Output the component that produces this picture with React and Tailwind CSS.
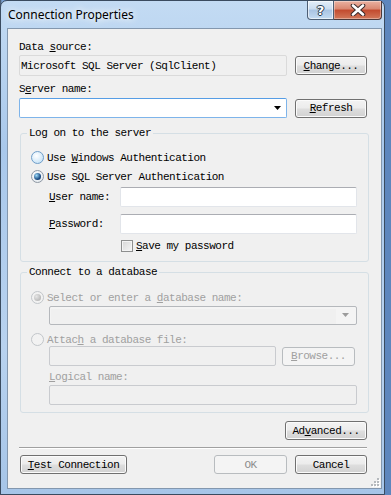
import React from "react";

const mono = "font-['Liberation_Mono',monospace] text-[11px] tracking-[-0.5px] leading-[12px]";

function Btn({ children, className = "", disabled }) {
  return (
    <div
      className={`flex items-center justify-center rounded-[3px] border ${
        disabled
          ? "border-[#b8bcbf] bg-[#f4f4f4] text-[#8c8c8c]"
          : "border-[#707070] bg-[linear-gradient(#f3f3f3_0%,#ececec_48%,#dedede_52%,#d2d2d2_100%)] text-black shadow-[inset_0_0_0_1px_#fbfbfb]"
      } ${className}`}
    >
      {children}
    </div>
  );
}

function Radio({ checked, disabled }) {
  return (
    <div
      className={`flex h-[13px] w-[13px] shrink-0 items-center justify-center rounded-full border ${
        disabled
          ? "border-[#c2c6ca] bg-[#f2f2f2]"
          : checked
          ? "border-[#8e98a3] bg-[radial-gradient(circle_at_40%_35%,#ffffff,#dde4ea)]"
          : "border-[#6f9ec9] bg-[radial-gradient(circle_at_40%_35%,#ffffff,#b9dcf5)]"
      }`}
    >
      {checked && (
        <div
          className={`h-[7px] w-[7px] rounded-full ${
            disabled
              ? "bg-[radial-gradient(circle_at_35%_35%,#e6e6e6,#a9a9a9)]"
              : "bg-[radial-gradient(circle_at_35%_35%,#9fdcfb,#1d4f86_60%,#0c2c55)]"
          }`}
        />
      )}
    </div>
  );
}

function Input({ className = "", disabled, children }) {
  return (
    <div
      className={`relative rounded-[2px] border ${
        disabled
          ? "border-[#c9cbcf] bg-[#f0f0f0]"
          : "border-[#e2e5ea] border-t-[#abadb3] bg-white"
      } ${className}`}
    >
      {children}
    </div>
  );
}

function Group({ label, className = "", children }) {
  return (
    <div className={`relative ml-[1px] w-[349px] rounded-[3px] border border-[#d5dfe5] ${className}`}>
      <span className="absolute left-[6px] top-[-7px] bg-[#f0f0f0] px-[2px] text-black">
        {label}
      </span>
      {children}
    </div>
  );
}

export default function App() {
  return (
    <div className="flex h-[495px] w-[391px] overflow-hidden bg-[linear-gradient(90deg,#3d4a5a_0px,#7fa6d6_2px,#5d86bd_6px)]">
      {/* Window */}
      <div className="flex h-[495px] w-[385px] shrink-0 flex-col rounded-t-[7px] border border-[#3a4b5f] bg-[linear-gradient(180deg,#c3dbf3,#a9c8eb_30%,#b8d2ef_70%,#a6c5e8)]">
        {/* Title bar */}
        <div className="flex h-[27px] items-start">
          <span className="ml-[7px] mt-[6px] font-['Noto_Sans',sans-serif] text-[12px] leading-[16px] text-black [text-shadow:0_0_6px_#ffffff,0_0_10px_#ffffff]">
            Connection Properties
          </span>
          <div className="ml-auto mr-[2px] flex">
            <div className="flex h-[19px] w-[27px] items-center justify-center rounded-bl-[4px] border border-t-0 border-[#4d5e74] bg-[linear-gradient(#e3eef9,#c9dcf0_45%,#a9c3e2_50%,#c4dbf2)] shadow-[inset_0_0_0_1px_rgba(255,255,255,0.6)]">
              <span className="font-['DejaVu_Sans',sans-serif] text-[13px] font-bold leading-[13px] text-white [text-shadow:0_0_1px_#2c3a4c,1px_0_0_#2c3a4c,-1px_0_0_#2c3a4c,0_1px_0_#2c3a4c,0_-1px_0_#2c3a4c]">
                ?
              </span>
            </div>
            <div className="flex h-[19px] w-[48px] items-center justify-center rounded-br-[4px] border border-l-0 border-t-0 border-[#4d3a3a] bg-[linear-gradient(#eab2a2,#d98670_45%,#c24a2e_50%,#d2785a)] shadow-[inset_0_0_0_1px_rgba(255,255,255,0.35)]">
              <svg width="16" height="12" viewBox="0 0 16 12">
                <path d="M3 1.5 L13 10.5 M13 1.5 L3 10.5" stroke="#3b2a2a" strokeWidth="4.6" strokeLinecap="round" />
                <path d="M3 1.5 L13 10.5 M13 1.5 L3 10.5" stroke="#ffffff" strokeWidth="2.6" strokeLinecap="round" />
              </svg>
            </div>
          </div>
        </div>

        {/* Client area */}
        <div className={`relative mb-[5px] ml-[6px] mr-[2px] flex-1 border border-[#8397ae] bg-[#f0f0f0] ${mono} text-black`}>
          <div className="flex w-[359px] flex-col pl-[11px]">
            <div className="mt-[12px] h-[12px]">
              Data <u>s</u>ource:
            </div>
            <div className="mt-[2px] flex h-[21px] items-center justify-between">
              <div className="flex h-[21px] w-[268px] items-center rounded-[2px] border border-[#dadada] bg-[#f0f0f0] pl-[1px]">
                Microsoft SQL Server (SqlClient)
              </div>
              <Btn className="h-[19px] w-[72px]">
                <span><u>C</u>hange...</span>
              </Btn>
            </div>
            <div className="mt-[7px] h-[12px]">
              S<u>e</u>rver name:
            </div>
            <div className="mt-[3px] flex h-[20px] items-center justify-between">
              <div className="flex h-[20px] w-[268px] items-center justify-end rounded-[2px] border border-[#7eb4ea] border-t-[#569de5] bg-white pr-[4px]">
                <svg width="8" height="5" viewBox="0 0 8 5">
                  <path d="M0 0 H7 L3.5 4 Z" fill="#000" />
                </svg>
              </div>
              <Btn className="h-[19px] w-[72px]">
                <span><u>R</u>efresh</span>
              </Btn>
            </div>

            {/* Log on group */}
            <Group label="Log on to the server" className="mt-[15px] pb-[9px] pt-[17px]">
              <div className="flex h-[13px] items-center gap-[3px] pl-[10px]">
                <Radio />
                <span>Use <u>W</u>indows Authentication</span>
              </div>
              <div className="mt-[6px] flex h-[13px] items-center gap-[3px] pl-[10px]">
                <Radio checked />
                <span>Use S<u>Q</u>L Server Authentication</span>
              </div>
              <div className="mt-[4px] flex h-[20px] items-center pl-[28px]">
                <span className="w-[71px]"><u>U</u>ser name:</span>
                <Input className="h-[20px] w-[237px]" />
              </div>
              <div className="mt-[7px] flex h-[20px] items-center pl-[28px]">
                <span className="w-[71px]"><u>P</u>assword:</span>
                <Input className="h-[20px] w-[237px]" />
              </div>
              <div className="mt-[6px] flex h-[12px] items-center gap-[3px] pl-[100px]">
                <div className="h-[12px] w-[12px] border border-[#8e8f8f] bg-[linear-gradient(135deg,#d6d6d6,#f6f6f6)] shadow-[inset_0_0_0_1px_#f4f4f4]" />
                <span><u>S</u>ave my password</span>
              </div>
            </Group>

            {/* Database group */}
            <Group label="Connect to a database" className="mt-[10px] pb-[7px] pt-[18px]">
              <div className="flex h-[13px] items-center gap-[3px] pl-[10px] text-[#a0a0a0]">
                <Radio checked disabled />
                <span>Select or enter a <u>d</u>atabase name:</span>
              </div>
              <div className="ml-[28px] mt-[2px] flex h-[19px] w-[308px] items-center rounded-[2px] border border-[#b5b8bc] bg-[#f4f4f4]">
                <div className="ml-[1px] mt-[1px] h-[15px] flex-1 bg-[#f0f0f0]" />
                <div className="flex w-[20px] items-center justify-center">
                  <svg width="8" height="5" viewBox="0 0 8 5">
                    <path d="M0 0 H7 L3.5 4 Z" fill="#9c9c9c" />
                  </svg>
                </div>
              </div>
              <div className="mt-[8px] flex h-[13px] items-center gap-[3px] pl-[10px] text-[#a0a0a0]">
                <Radio disabled />
                <span>Attac<u>h</u> a database file:</span>
              </div>
              <div className="ml-[28px] flex h-[20px] w-[308px] items-center gap-[6px]">
                <Input disabled className="h-[20px] w-[227px]" />
                <Btn disabled className="h-[19px] w-[73px]">
                  <span className="text-[#a0a0a0]"><u>B</u>rowse...</span>
                </Btn>
              </div>
              <div className="ml-[28px] mt-[5px] h-[12px] text-[#a0a0a0]">
                <u>L</u>ogical name:
              </div>
              <Input disabled className="ml-[28px] mt-[2px] h-[20px] w-[308px]" />
            </Group>

            <div className="mt-[8px] flex justify-end">
              <Btn className="h-[19px] w-[82px]">
                <span>Ad<u>v</u>anced...</span>
              </Btn>
            </div>

            <div className="mt-[7px] h-px bg-[#a0a0a0]" />
            <div className="h-px bg-white" />

            <div className="mt-[6px] flex h-[19px] items-center">
              <Btn className="ml-[1px] h-[19px] w-[107px]">
                <span><u>T</u>est Connection</span>
              </Btn>
              <Btn disabled className="ml-auto h-[19px] w-[73px]">
                <span>OK</span>
              </Btn>
              <Btn className="ml-[8px] h-[19px] w-[72px]">
                <span>Cancel</span>
              </Btn>
            </div>
          </div>

          {/* Resize grip */}
          <svg className="absolute bottom-[1px] right-[1px]" width="10" height="10" viewBox="0 0 10 10">
            {[
              [7, 1],
              [4, 4],
              [7, 4],
              [1, 7],
              [4, 7],
              [7, 7],
            ].map(([x, y]) => (
              <g key={`${x}-${y}`}>
                <rect x={x + 1} y={y + 1} width="2" height="2" fill="#ffffff" />
                <rect x={x} y={y} width="2" height="2" fill="#b5b9bd" />
              </g>
            ))}
          </svg>
        </div>
      </div>
    </div>
  );
}
